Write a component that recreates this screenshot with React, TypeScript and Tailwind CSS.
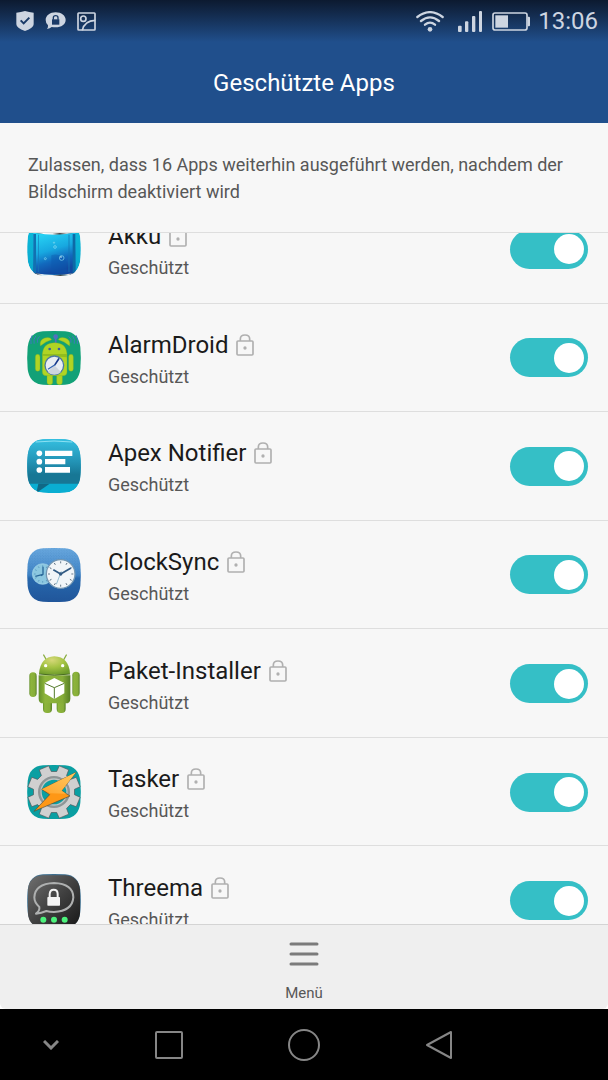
import React from 'react';

interface ProtectedApp {
  id: string;
  name: string;
  icon: React.ReactNode;
}

const IconFrame: React.FC<{ children: React.ReactNode }> = ({ children }) => (
  <svg viewBox="0 0 162 162" className="h-[54px] w-[54px] shrink-0 overflow-visible" aria-hidden="true">
    {children}
  </svg>
);

// rounded square shared by most launcher icons
const TILE = 'M48 1Q81 -1 114 1Q155 4 160 48Q163 81 160 114Q155 158 114 161Q81 163 48 161Q7 158 2 114Q-1 81 2 48Q7 4 48 1Z';

const AkkuIcon = () => (
  <IconFrame>
    <defs>
      <linearGradient id="akku-bg" x1="0" y1="0" x2="0" y2="1">
        <stop offset="0" stopColor="#0cbcdc" />
        <stop offset="1" stopColor="#0aa6cb" />
      </linearGradient>
      <linearGradient id="akku-water" x1="0" y1="0" x2="0.3" y2="1">
        <stop offset="0.1" stopColor="#27d2f4" />
        <stop offset="0.5" stopColor="#17a8e0" />
        <stop offset="0.75" stopColor="#1269bd" />
        <stop offset="1" stopColor="#1248a0" />
      </linearGradient>
      <linearGradient id="akku-rim" x1="0" y1="0" x2="1" y2="0">
        <stop offset="0" stopColor="#333" />
        <stop offset="0.2" stopColor="#fff" />
        <stop offset="0.45" stopColor="#eee" />
        <stop offset="0.65" stopColor="#444" />
        <stop offset="0.85" stopColor="#ddd" />
        <stop offset="1" stopColor="#555" />
      </linearGradient>
      <clipPath id="akku-clip"><path d={TILE} /></clipPath>
    </defs>
    <g clipPath="url(#akku-clip)">
      <path d={TILE} fill="url(#akku-bg)" />
      <path d="M19 30h126v128H19z" fill="url(#akku-water)" />
      <path d="M19 36h8v122h-8z" fill="#1271b0" />
      <path d="M137 36h8v122h-8z" fill="#0d6aa6" />
      <path d="M33 38h3v112h-3zM124 38h4v112h-4z" fill="#1678b6" opacity=".6" />
      <path d="M73 40v112h46V120Q100 90 73 100z" fill="#0c57ac" opacity=".4" />
      <path d="M27 26q54 12 110 0v7q-55 10-110 0z" fill="url(#akku-rim)" />
      <path d="M22 153q60 12 120 0v6q-60 10-120 0z" fill="url(#akku-rim)" />
      <g fill="none" stroke="#8bdcf5" strokeWidth="2">
        <circle cx="104" cy="108" r="7" />
        <circle cx="84" cy="75" r="4" />
        <circle cx="55" cy="110" r="3" />
        <circle cx="81" cy="62" r="2" />
      </g>
      <circle cx="102" cy="105" r="2.5" fill="#d8f4ff" />
    </g>
  </IconFrame>
);

const AlarmDroidIcon = () => (
  <IconFrame>
    <path d={TILE} fill="#12a177" />
    <g fill="none" stroke="#3f78bd" strokeWidth="3" strokeLinecap="round">
      <path d="M12 38Q9 24 15 14M21 37Q18 25 26 15M31 34Q28 24 37 17" />
      <path d="M151 38Q154 24 148 14M142 37Q145 25 137 15M132 34Q135 24 126 17" />
    </g>
    <path d="M86 20v16" stroke="#536fc0" strokeWidth="5" />
    <circle cx="86" cy="17" r="7" fill="#536fc0" />
    <g fill="#b0d424" stroke="#7dab20" strokeWidth="1">
      <path d="M40 45Q36 27 53 21Q70 17 74 26Q55 31 40 45Z" />
      <path d="M128 45Q132 27 115 21Q98 17 94 26Q113 31 128 45Z" />
      <rect x="25" y="70" width="14" height="51" rx="7" />
      <rect x="125" y="70" width="14" height="51" rx="7" />
      <rect x="60" y="112" width="17" height="49" rx="8" />
      <rect x="89" y="112" width="17" height="49" rx="8" />
      <path d="M46 68Q49 35 83 35Q117 35 120 68V123Q120 134 109 134H57Q46 134 46 123Z" />
    </g>
    <path d="M46 69h74v10L46 74z" fill="#86b31c" opacity=".7" />
    <circle cx="68" cy="54" r="4" fill="#3c5da6" />
    <circle cx="96" cy="54" r="4" fill="#3c5da6" />
    <circle cx="82" cy="103" r="28" fill="#e8edf3" stroke="#4e79a1" strokeWidth="4" />
    <path d="M82 103l20 20a28 28 0 0 1-40 0z" fill="#cdd4dd" />
    <path d="M95 84L84 101" stroke="#16388a" strokeWidth="5" strokeLinecap="round" />
    <path d="M84 101L64 114" stroke="#3262b0" strokeWidth="3.5" strokeLinecap="round" />
  </IconFrame>
);

const ApexNotifierIcon = () => (
  <IconFrame>
    <defs>
      <linearGradient id="apex-bg" x1="0" y1="0" x2="0" y2="1">
        <stop offset="0" stopColor="#35bfe0" />
        <stop offset="0.5" stopColor="#2394b6" />
        <stop offset="0.8" stopColor="#177795" />
      </linearGradient>
      <clipPath id="apex-clip"><path d={TILE} /></clipPath>
    </defs>
    <g clipPath="url(#apex-clip)">
      <path d={TILE} fill="#0aaed2" />
      <path d="M0 0h162v134H0z" fill="url(#apex-bg)" />
      <path d="M34 134h34L28 162z" fill="#116885" />
      <path d="M26 9q55-6 110 0" fill="none" stroke="#8be0f2" strokeWidth="3" />
    </g>
    <g fill="#fff">
      <circle cx="37" cy="43" r="8.5" />
      <circle cx="37" cy="68" r="8.5" />
      <circle cx="37" cy="93" r="8.5" />
      <path d="M54 35h82v16H54zM54 60h61v16H54zM54 84h75v17H54z" />
    </g>
  </IconFrame>
);

const TICKS = [0, 30, 60, 90, 120, 150, 180, 210, 240, 270, 300, 330];

const ClockSyncIcon = () => (
  <IconFrame>
    <defs>
      <linearGradient id="sync-bg" x1="0" y1="0" x2="0" y2="1">
        <stop offset="0" stopColor="#6aa9df" />
        <stop offset="0.5" stopColor="#3f83c5" />
        <stop offset="0.56" stopColor="#2768ad" />
        <stop offset="1" stopColor="#20559a" />
      </linearGradient>
      <pattern id="sync-dots" width="8" height="8" patternUnits="userSpaceOnUse">
        <circle cx="2" cy="2" r="1.3" fill="#1d5a9c" opacity=".35" />
        <circle cx="6" cy="6" r="1.3" fill="#1d5a9c" opacity=".35" />
      </pattern>
    </defs>
    <path d={TILE} fill="url(#sync-bg)" />
    <path d={TILE} fill="url(#sync-dots)" />
    <circle cx="47" cy="78" r="31" fill="#8bc7e0" stroke="#a9d8ea" strokeWidth="2" />
    {TICKS.map((a) => (
      <path key={a} d="M47 52v5" stroke="#4d8db6" strokeWidth="2" transform={`rotate(${a} 47 78)`} />
    ))}
    <path d="M48 56v23L25 85M48 79l-6 4" fill="none" stroke="#286798" strokeWidth="4" />
    <circle cx="101" cy="78" r="43" fill="#f1f5f8" stroke="#7296b2" strokeWidth="4" />
    {TICKS.map((a) => (
      <path key={a} d="M101 40v6" stroke="#4b6173" strokeWidth="2.5" transform={`rotate(${a} 101 78)`} />
    ))}
    <path d="M79 65L101 78L132 60" fill="none" stroke="#315a83" strokeWidth="5" />
    <path d="M103 70L88 109" stroke="#83b2ca" strokeWidth="2.5" />
    <circle cx="101" cy="78" r="5" fill="#315a83" />
  </IconFrame>
);

const PaketIcon = () => (
  <IconFrame>
    <defs>
      <linearGradient id="paket-body" x1="0" y1="0" x2="1" y2="0">
        <stop offset="0" stopColor="#64902b" />
        <stop offset="0.2" stopColor="#8eb53c" />
        <stop offset="0.75" stopColor="#86ad39" />
        <stop offset="1" stopColor="#577f25" />
      </linearGradient>
      <radialGradient id="paket-head" cx="0.42" cy="0.2" r="0.8">
        <stop offset="0" stopColor="#d6d879" />
        <stop offset="0.5" stopColor="#a4c343" />
        <stop offset="1" stopColor="#6f9d2c" />
      </radialGradient>
    </defs>
    <path d="M50-6L60 12M118-6L108 12" stroke="#88ac41" strokeWidth="4" strokeLinecap="round" />
    <g fill="url(#paket-body)">
      <rect x="7" y="46" width="22" height="74" rx="11" />
      <rect x="136" y="44" width="22" height="74" rx="11" />
      <rect x="48" y="110" width="27" height="58" rx="12" />
      <rect x="89" y="110" width="27" height="58" rx="12" />
      <path d="M35 55h95v70q0 14-14 14H49q-14 0-14-14z" />
    </g>
    <path d="M36 50Q40 0 82-2Q126 0 129 50Q84 57 36 50Z" fill="url(#paket-head)" />
    <path d="M36 51Q82 58 129 51" fill="none" stroke="#496d1f" strokeWidth="3" />
    <circle cx="56" cy="26" r="5" fill="#fff" />
    <circle cx="107" cy="26" r="5" fill="#fff" />
    <path d="M82 63L112 78V109L82 126L53 109V78Z" fill="#fff" />
    <path d="M53 79L82 92L112 79M82 92V125" fill="none" stroke="#547b2b" strokeWidth="3" />
  </IconFrame>
);

const gearPath = () => {
  const points: string[] = [];
  for (let i = 0; i < 8; i++) {
    const mid = 22.5 + i * 45;
    [[-15, 62], [-11, 80], [11, 80], [15, 62]].forEach(([offset, radius]) => {
      const angle = ((mid + offset) * Math.PI) / 180;
      points.push(`${(81 + radius * Math.cos(angle)).toFixed(1)} ${(81 + radius * Math.sin(angle)).toFixed(1)}`);
    });
  }
  return `M${points.join('L')}Z`;
};

const TaskerIcon = () => (
  <IconFrame>
    <defs>
      <linearGradient id="tasker-top" x1="1" y1="0" x2="0" y2="1">
        <stop offset="0" stopColor="#ffc861" />
        <stop offset="1" stopColor="#ffa52d" />
      </linearGradient>
    </defs>
    <path d={TILE} fill="#0a9fa2" />
    <path d={gearPath()} fill="#d0d0d0" stroke="#4b5559" strokeWidth="2" strokeLinejoin="round" />
    <circle cx="81" cy="81" r="44" fill="#0a9fa2" stroke="#8e9596" strokeWidth="8" />
    <circle cx="81" cy="81" r="39" fill="none" stroke="#c1c3c3" strokeWidth="4" />
    <path d="M147 22L44 73L68 89L21 139L129 93L104 77Z" fill="#fe9716" stroke="#514d3a" strokeWidth="2" />
    <path d="M147 22L44 73L70 85L118 86L104 77Z" fill="url(#tasker-top)" />
  </IconFrame>
);

const ThreemaIcon = () => (
  <IconFrame>
    <defs>
      <linearGradient id="threema-bg" x1="0" y1="0" x2="1" y2="1">
        <stop offset="0" stopColor="#707070" />
        <stop offset="0.5" stopColor="#414141" />
        <stop offset="0.9" stopColor="#202020" />
      </linearGradient>
    </defs>
    <path d={TILE} fill="#3f6f8f" />
    <path d="M3 46Q7 8 46 4H116Q154 8 159 46V119Q154 158 116 161H46Q6 158 3 119Z" fill="url(#threema-bg)" />
    <path
      d="M27 119Q39 110 37 99Q22 86 22 70Q24 29 81 27Q138 29 139 70Q136 111 81 114Q68 114 58 111Q43 117 27 119Z"
      fill="none"
      stroke="#aeb0b0"
      strokeWidth="6"
      strokeLinejoin="round"
    />
    <path d="M68 70V60Q69 47 80 47Q92 47 92 60V70" fill="none" stroke="#f4f4f4" strokeWidth="6" />
    <rect x="61" y="69" width="38" height="26" rx="2" fill="#f4f4f4" />
    <g fill="#4cf27c">
      <circle cx="49" cy="137" r="9" />
      <circle cx="81" cy="137" r="9" />
      <circle cx="113" cy="137" r="9" />
    </g>
  </IconFrame>
);

const LockIcon = () => (
  <svg viewBox="0 0 54 66" className="h-[22px] w-[18px] shrink-0" fill="none" stroke="#b0b0b0" strokeWidth="5" aria-hidden="true">
    <rect x="3" y="21" width="48" height="42" rx="3" />
    <path d="M13 21V15Q13 3 27 3Q41 3 41 15V21" />
    <circle cx="27" cy="42" r="5" fill="#b0b0b0" stroke="none" />
  </svg>
);

const apps: ProtectedApp[] = [
  { id: 'akku', name: 'Akku', icon: <AkkuIcon /> },
  { id: 'alarmdroid', name: 'AlarmDroid', icon: <AlarmDroidIcon /> },
  { id: 'apex-notifier', name: 'Apex Notifier', icon: <ApexNotifierIcon /> },
  { id: 'clocksync', name: 'ClockSync', icon: <ClockSyncIcon /> },
  { id: 'paket-installer', name: 'Paket-Installer', icon: <PaketIcon /> },
  { id: 'tasker', name: 'Tasker', icon: <TaskerIcon /> },
  { id: 'threema', name: 'Threema', icon: <ThreemaIcon /> },
];

const StatusBar = () => (
  <div className="flex h-[42px] items-center justify-between bg-linear-to-b from-[#0c1a30] to-[#204f8c] pr-[10px] pl-4 text-[#cdd5e1]">
    <div className="flex items-center gap-[11px]">
      <svg viewBox="0 0 54 60" className="h-5 w-[18px]" aria-hidden="true">
        <path d="M1 5Q15 4 27 0Q39 4 53 5V40Q53 51 27 60Q1 51 1 40Z" fill="currentColor" />
        <path d="M14 28L23 37L40 20" fill="none" stroke="#1a3a67" strokeWidth="6" />
      </svg>
      <svg viewBox="0 0 63 54" className="h-[18px] w-[21px]" aria-hidden="true">
        <path d="M32 1C49 1 62 11 62 24S49 46 32 46Q25 46 20 45Q15 50 6 51Q10 46 9 40Q2 34 2 24C2 11 15 1 32 1Z" fill="currentColor" />
        <path d="M25 23V17Q25 11 32 11Q39 11 39 17V23" fill="none" stroke="#1a3a67" strokeWidth="4" />
        <rect x="21" y="22" width="22" height="16" fill="#1a3a67" />
      </svg>
      <svg viewBox="0 0 57 57" className="h-[19px] w-[19px]" fill="none" stroke="currentColor" strokeWidth="5" aria-hidden="true">
        <rect x="3" y="3" width="51" height="51" rx="2" />
        <circle cx="19" cy="20" r="8" />
        <path d="M16 55Q22 26 55 25" />
      </svg>
    </div>
    <div className="flex items-center">
      <svg viewBox="0 0 84 63" className="mr-[14px] h-[21px] w-7" fill="none" stroke="currentColor" strokeWidth="7" aria-hidden="true">
        <path d="M4 18Q42-11 80 18M15 30Q42 8 69 30M27 41Q42 29 57 41" strokeLinecap="round" />
        <circle cx="42" cy="55" r="7" fill="currentColor" stroke="none" />
      </svg>
      <svg viewBox="0 0 72 63" className="mr-[10px] h-[21px] w-6" fill="currentColor" aria-hidden="true">
        <rect x="0" y="44" width="11" height="19" rx="3" />
        <rect x="21" y="31" width="10" height="32" rx="3" />
        <rect x="42" y="15" width="10" height="48" rx="3" />
        <rect x="63" y="0" width="9" height="63" rx="3" />
      </svg>
      <svg viewBox="0 0 114 57" className="mr-2 h-[19px] w-[38px]" aria-hidden="true">
        <rect x="3" y="3" width="102" height="51" rx="6" fill="none" stroke="currentColor" strokeWidth="5" />
        <rect x="10" y="10" width="38" height="37" fill="currentColor" />
        <path d="M107 14h4q3 0 3 3v23q0 3-3 3h-4z" fill="currentColor" />
      </svg>
      <span className="text-2xl leading-8">13:06</span>
    </div>
  </div>
);

const AppRow: React.FC<{ app: ProtectedApp }> = ({ app }) => (
  <li className="flex items-center border-b border-[#dedede] pt-px pr-5 pl-[27px]">
    {app.icon}
    <label htmlFor={app.id} className="ml-[27px] flex grow flex-col gap-1 pt-[6px]">
      <span className="flex items-center gap-2 text-2xl leading-7 text-[#1b1b1b]">
        {app.name}
        <LockIcon />
      </span>
      <span className="text-lg leading-7 text-[#575757]">Geschützt</span>
    </label>
    <input
      id={app.id}
      type="checkbox"
      role="switch"
      defaultChecked
      className="flex h-[39px] w-[78px] shrink-0 cursor-pointer appearance-none items-center rounded-full bg-[#c9c9c9] px-1 before:h-[30px] before:w-[30px] before:rounded-full before:bg-white checked:justify-end checked:bg-[#35bfc6]"
    />
  </li>
);

const NavBar = () => (
  <nav className="grid h-[71px] grid-cols-[3fr_4fr_4fr_4fr_3fr] bg-black text-[#868686]">
    <button type="button" aria-label="Leiste ausblenden" className="flex items-center justify-center">
      <svg viewBox="0 0 16 10" className="h-[10px] w-4" fill="none" stroke="currentColor" strokeWidth="3">
        <path d="M1 1L8 8L15 1" />
      </svg>
    </button>
    <button type="button" aria-label="Letzte Apps" className="flex items-center justify-center">
      <svg viewBox="0 0 28 28" className="h-7 w-7" fill="none" stroke="currentColor" strokeWidth="2">
        <rect x="1" y="1" width="26" height="26" rx="1" />
      </svg>
    </button>
    <button type="button" aria-label="Startbildschirm" className="flex items-center justify-center">
      <svg viewBox="0 0 32 32" className="h-8 w-8" fill="none" stroke="currentColor" strokeWidth="2">
        <circle cx="16" cy="16" r="15" />
      </svg>
    </button>
    <button type="button" aria-label="Zurück" className="flex items-center justify-center">
      <svg viewBox="0 0 28 30" className="h-[30px] w-7" fill="none" stroke="currentColor" strokeWidth="2" strokeLinejoin="round">
        <path d="M26 2V28L2 15Z" />
      </svg>
    </button>
  </nav>
);

const App: React.FC = () => {
  return (
    <div className="flex h-screen flex-col overflow-hidden bg-[#f7f7f7] font-['Roboto',sans-serif]">
      <header className="bg-[#204f8c]">
        <StatusBar />
        <h1 className="flex h-[81px] items-center justify-center text-2xl text-white">Geschützte Apps</h1>
      </header>

      <p className="border-b border-[#dedede] px-7 pt-7 pb-[27px] text-lg leading-[27px] text-[#575757]">
        Zulassen, dass 16 Apps weiterhin ausgeführt werden, nachdem der Bildschirm deaktiviert wird
      </p>

      <main className="min-h-0 flex-1 overflow-hidden">
        {/* list is scrolled a little, so the first row is cut off */}
        <ul className="-mt-[38px] grid min-h-[760px] auto-rows-fr">
          {apps.map((app) => (
            <AppRow key={app.id} app={app} />
          ))}
        </ul>
      </main>

      <footer className="bg-white">
        <button
          type="button"
          className="flex h-[85px] w-full flex-col items-center justify-between rounded-b-md border-t border-[#d4d4d4] bg-[#efefef] pt-[17px] pb-1 text-[#575757]"
        >
          <svg viewBox="0 0 30 24" className="h-6 w-[30px]" stroke="#7b7b7b" strokeWidth="3" strokeLinecap="round" aria-hidden="true">
            <path d="M2 2H28M2 12H28M2 22H28" />
          </svg>
          <span className="text-[15px] leading-6">Menü</span>
        </button>
      </footer>

      <NavBar />
    </div>
  );
};

export default App;
